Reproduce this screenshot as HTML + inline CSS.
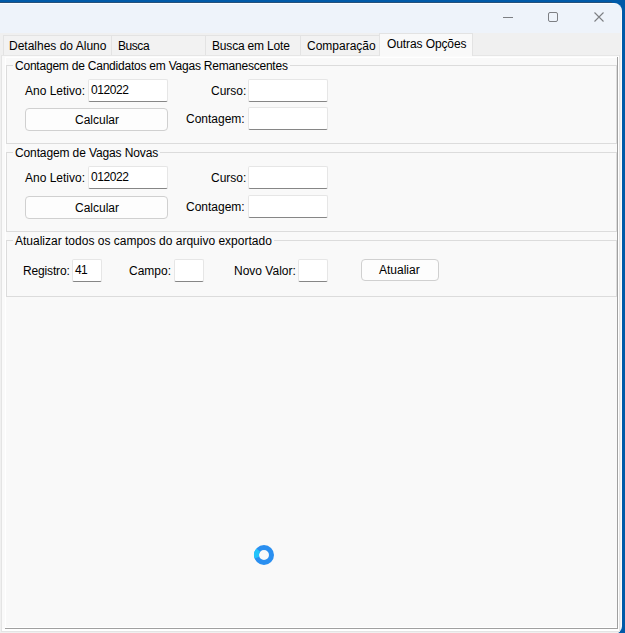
<!DOCTYPE html>
<html><head><meta charset="utf-8">
<style>
*{box-sizing:border-box;margin:0;padding:0}
html,body{width:625px;height:633px;overflow:hidden;background:#005aa8}
body{position:relative;font-family:"Liberation Sans",sans-serif;font-size:12px;color:#000}
.a{position:absolute}
.t{position:absolute;white-space:nowrap;line-height:14px;height:14px}
#win{left:0;top:3px;width:622px;height:631px;background:#f0f0f0;border-top-right-radius:8px;border-bottom-right-radius:8px;overflow:hidden;border-right:1px solid #fafafa;border-top:1px solid #fbfdff}
#title{left:0;top:0;width:622px;height:29px;background:#eef3fa}
.tab{position:absolute;top:35px;height:20px;background:#f2f2f2;border:1px solid #e3e3e3;border-bottom:none}
.tb{position:absolute;background:#fff;border:1px solid #e6e6e6;border-bottom:1px solid #868686;border-radius:2px}
.btn{position:absolute;background:#fdfdfd;border:1px solid #d0d0d0;border-radius:4px}
.grp{position:absolute;border:1px solid #dcdcdc}
.gt{position:absolute;white-space:nowrap;line-height:14px;background:#f9f9f9;padding:0 2px}
</style></head><body>
<!-- window -->
<div class="a" style="left:0;top:2px;width:612px;height:1px;background:#26507a"></div>
<div id="win" class="a">
  <div id="title" class="a"></div>
</div>
<!-- title bar icons -->
<div class="a" style="left:503px;top:17px;width:10px;height:1px;background:#7d7f83"></div>
<div class="a" style="left:548px;top:12px;width:10px;height:10px;border:1px solid #7d7f83;border-radius:2px"></div>
<svg class="a" style="left:594px;top:12px" width="10" height="10" viewBox="0 0 10 10"><path d="M0.5 0.5L9.5 9.5M9.5 0.5L0.5 9.5" stroke="#7d7f83" stroke-width="1.1"/></svg>

<!-- tab page -->
<div class="a" style="left:1px;top:55px;width:619px;height:577px;background:#f9f9f9;border:1px solid #e4e4e4;border-top-color:#e6e6e6"></div>
<div class="a" style="left:2px;top:56px;width:616px;height:1px;background:#fbfbfb"></div>
<div class="a" style="left:2px;top:56px;width:3px;height:575px;background:#fafafa"></div>
<div class="a" style="left:5px;top:57px;width:612px;height:1px;background:#fff"></div>
<div class="a" style="left:5px;top:57px;width:1px;height:571px;background:#fff"></div>
<div class="a" style="left:617px;top:57px;width:1px;height:572px;background:#a0a0a0"></div>
<div class="a" style="left:5px;top:628px;width:613px;height:1px;background:#a0a0a0"></div>
<div class="a" style="left:5px;top:627px;width:612px;height:1px;background:#fff"></div>
<div class="a" style="left:618px;top:56px;width:1px;height:575px;background:#fff"></div>
<div class="a" style="left:2px;top:629px;width:617px;height:2px;background:#fff"></div>

<!-- tabs -->
<div class="tab" style="left:3px;width:109px"></div>
<div class="tab" style="left:111px;width:95px"></div>
<div class="tab" style="left:205px;width:96px"></div>
<div class="tab" style="left:300px;width:80px"></div>
<div class="a" style="left:379px;top:33px;width:94px;height:23px;background:#f9f9f9;border:1px solid #e3e3e3;border-bottom:none"></div>
<div class="t" style="left:9px;top:39px">Detalhes do Aluno</div>
<div class="t" style="left:118px;top:39px;letter-spacing:-0.45px">Busca</div>
<div class="t" style="left:212px;top:39px;letter-spacing:-0.18px">Busca em Lote</div>
<div class="t" style="left:307px;top:39px">Comparação</div>
<div class="t" style="left:387px;top:37px;letter-spacing:-0.1px">Outras Opções</div>

<!-- group 1 -->
<div class="grp" style="left:6px;top:65px;width:611px;height:79px"></div>
<div class="gt" style="left:13px;top:59px;letter-spacing:-0.22px">Contagem de Candidatos em Vagas Remanescentes</div>
<div class="t" style="left:25px;top:84px">Ano Letivo:</div>
<div class="tb" style="left:88px;top:79px;width:80px;height:23px"></div>
<div class="t" style="left:91px;top:83px;letter-spacing:-0.4px">012022</div>
<div class="btn" style="left:25px;top:108px;width:143px;height:23px"></div>
<div class="t" style="left:75px;top:113px">Calcular</div>
<div class="t" style="left:211px;top:84px">Curso:</div>
<div class="tb" style="left:248px;top:79px;width:80px;height:23px"></div>
<div class="t" style="left:186px;top:112px">Contagem:</div>
<div class="tb" style="left:248px;top:107px;width:80px;height:23px"></div>

<!-- group 2 -->
<div class="grp" style="left:6px;top:152px;width:611px;height:80px"></div>
<div class="gt" style="left:13px;top:146px;letter-spacing:-0.12px">Contagem de Vagas Novas</div>
<div class="t" style="left:25px;top:171px">Ano Letivo:</div>
<div class="tb" style="left:88px;top:166px;width:80px;height:23px"></div>
<div class="t" style="left:91px;top:170px;letter-spacing:-0.4px">012022</div>
<div class="btn" style="left:25px;top:196px;width:143px;height:23px"></div>
<div class="t" style="left:75px;top:201px">Calcular</div>
<div class="t" style="left:211px;top:171px">Curso:</div>
<div class="tb" style="left:248px;top:166px;width:80px;height:23px"></div>
<div class="t" style="left:186px;top:200px">Contagem:</div>
<div class="tb" style="left:248px;top:195px;width:80px;height:23px"></div>

<!-- group 3 -->
<div class="grp" style="left:6px;top:240px;width:611px;height:57px"></div>
<div class="gt" style="left:13px;top:234px">Atualizar todos os campos do arquivo exportado</div>
<div class="t" style="left:23px;top:264px;letter-spacing:-0.15px">Registro:</div>
<div class="tb" style="left:72px;top:259px;width:30px;height:23px"></div>
<div class="t" style="left:75px;top:263px;letter-spacing:-0.6px">41</div>
<div class="t" style="left:129px;top:264px">Campo:</div>
<div class="tb" style="left:174px;top:259px;width:30px;height:23px"></div>
<div class="t" style="left:234px;top:264px">Novo Valor:</div>
<div class="tb" style="left:298px;top:259px;width:30px;height:23px"></div>
<div class="btn" style="left:361px;top:259px;width:78px;height:22px"></div>
<div class="t" style="left:379px;top:263px">Atualiar</div>

<!-- spinner -->
<svg class="a" style="left:253px;top:544px" width="22" height="22" viewBox="0 0 22 22">
<circle cx="11" cy="11" r="7.5" fill="none" stroke="#2a8ff0" stroke-width="5"/>
<path d="M3.95 13.57 A7.5 7.5 0 0 1 5.25 6.18" fill="none" stroke="#22c4fb" stroke-width="5"/>
</svg>
</body></html>
